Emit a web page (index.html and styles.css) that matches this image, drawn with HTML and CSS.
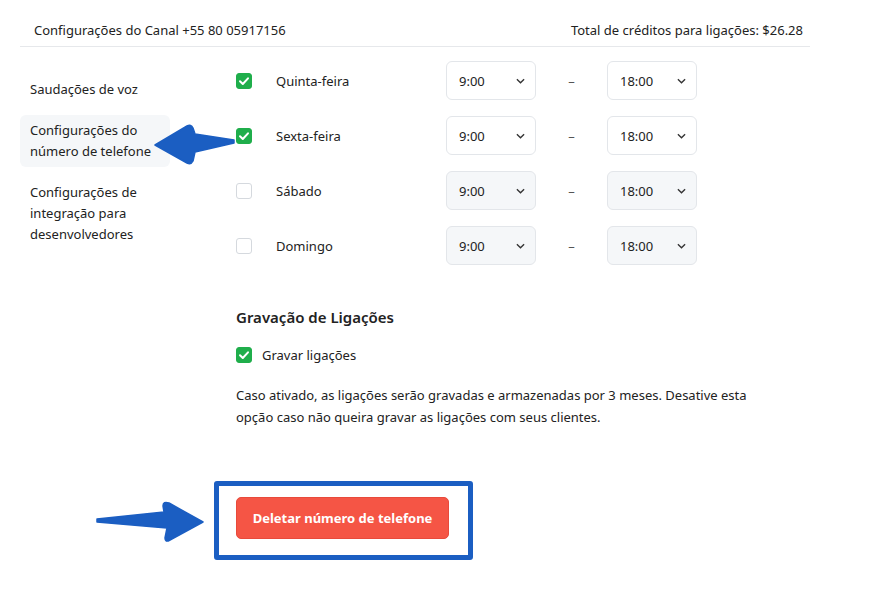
FILE: index.html
```html
<!DOCTYPE html>
<html lang="pt-BR">
<head>
<meta charset="utf-8">
<title>Configurações do Canal</title>
<link rel="stylesheet" href="styles.css">
</head>
<body>
<div class="page">
  <header class="topbar">
    <span>Configurações do Canal +55 80 05917156</span>
    <span>Total de créditos para ligações: $26.28</span>
  </header>
  <div class="main">
    <nav class="sidebar">
      <div class="nav-item">Saudações de voz</div>
      <div class="nav-item active">Configurações do número de telefone
        <svg class="arrow arrow-left" width="90" height="56" viewBox="0 0 90 56">
          <path d="M84 25 L45 19 L43 13 Q41 9 37 11 L5 30 L37 48 Q41 50 43 46 L45 37 L84 28 Z" fill="#1b5ec2" stroke="#1b5ec2" stroke-width="1.5" stroke-linejoin="round"/>
        </svg>
      </div>
      <div class="nav-item">Configurações de integração para desenvolvedores</div>
    </nav>
    <section class="content">
      <div class="days">
        <div class="day">
          <span class="cb checked"><svg viewBox="0 0 16 16"><path d="M4 8.2 L6.8 11 L12 5.3" fill="none" stroke="#fff" stroke-width="2" stroke-linecap="round" stroke-linejoin="round"/></svg></span>
          <span class="day-name">Quinta-feira</span>
          <div class="sel"><span>9:00</span><svg class="chev" viewBox="0 0 10 6"><path d="M1 1 L5 5 L9 1" fill="none" stroke="#333" stroke-width="1.5"/></svg></div>
          <span class="dash">–</span>
          <div class="sel"><span>18:00</span><svg class="chev" viewBox="0 0 10 6"><path d="M1 1 L5 5 L9 1" fill="none" stroke="#333" stroke-width="1.5"/></svg></div>
        </div>
        <div class="day">
          <span class="cb checked"><svg viewBox="0 0 16 16"><path d="M4 8.2 L6.8 11 L12 5.3" fill="none" stroke="#fff" stroke-width="2" stroke-linecap="round" stroke-linejoin="round"/></svg></span>
          <span class="day-name">Sexta-feira</span>
          <div class="sel"><span>9:00</span><svg class="chev" viewBox="0 0 10 6"><path d="M1 1 L5 5 L9 1" fill="none" stroke="#333" stroke-width="1.5"/></svg></div>
          <span class="dash">–</span>
          <div class="sel"><span>18:00</span><svg class="chev" viewBox="0 0 10 6"><path d="M1 1 L5 5 L9 1" fill="none" stroke="#333" stroke-width="1.5"/></svg></div>
        </div>
        <div class="day">
          <span class="cb"></span>
          <span class="day-name">Sábado</span>
          <div class="sel disabled"><span>9:00</span><svg class="chev" viewBox="0 0 10 6"><path d="M1 1 L5 5 L9 1" fill="none" stroke="#333" stroke-width="1.5"/></svg></div>
          <span class="dash">–</span>
          <div class="sel disabled"><span>18:00</span><svg class="chev" viewBox="0 0 10 6"><path d="M1 1 L5 5 L9 1" fill="none" stroke="#333" stroke-width="1.5"/></svg></div>
        </div>
        <div class="day">
          <span class="cb"></span>
          <span class="day-name">Domingo</span>
          <div class="sel disabled"><span>9:00</span><svg class="chev" viewBox="0 0 10 6"><path d="M1 1 L5 5 L9 1" fill="none" stroke="#333" stroke-width="1.5"/></svg></div>
          <span class="dash">–</span>
          <div class="sel disabled"><span>18:00</span><svg class="chev" viewBox="0 0 10 6"><path d="M1 1 L5 5 L9 1" fill="none" stroke="#333" stroke-width="1.5"/></svg></div>
        </div>
      </div>
      <h3 class="section-title">Gravação de Ligações</h3>
      <label class="check-row">
        <span class="cb checked"><svg viewBox="0 0 16 16"><path d="M4 8.2 L6.8 11 L12 5.3" fill="none" stroke="#fff" stroke-width="2" stroke-linecap="round" stroke-linejoin="round"/></svg></span>
        <span>Gravar ligações</span>
      </label>
      <p class="desc">Caso ativado, as ligações serão gravadas e armazenadas por 3 meses. Desative esta opção caso não queira gravar as ligações com seus clientes.</p>
      <div class="delete-wrap">
        <div class="highlight"></div>
        <svg class="arrow arrow-right" width="112" height="48" viewBox="0 0 112 48">
          <path d="M2 21 L69 14 L68 8 Q68 3 74 5 L108 24 L75 42 Q70 45 70 40 L72 30 L2 24 Z" fill="#1b5ec2" stroke="#1b5ec2" stroke-width="1.5" stroke-linejoin="round"/>
        </svg>
        <button class="btn-delete">Deletar número de telefone</button>
      </div>
    </section>
  </div>
</div>
</body>
</html>
```

FILE: styles.css
```css
* { box-sizing: border-box; }
html, body { min-height: 611px; }
body {
  margin: 0;
  background: #fff;
  font-family: "Noto Sans", "Open Sans", sans-serif;
  font-size: 13px;
  color: #222;
}
.page {
  width: 790px;
  margin-left: 20px;
  padding-bottom: 60px;
}
.topbar {
  display: flex;
  justify-content: space-between;
  align-items: center;
  height: 47px;
  padding: 14px 7px 0 14px;
  border-bottom: 1px solid #e6e8eb;
}
.main {
  display: grid;
  grid-template-columns: 150px 1fr;
  column-gap: 66px;
}
.sidebar {
  display: flex;
  flex-direction: column;
  gap: 10px;
  padding-top: 27px;
}
.nav-item {
  position: relative;
  padding: 5px 10px;
  line-height: 21px;
  border-radius: 6px;
}
.nav-item.active {
  background: #f5f7f9;
}
.arrow { position: absolute; }
.arrow-left { left: 130px; top: 0; }
.content {
  padding-top: 14px;
}
.days {
  display: flex;
  flex-direction: column;
  gap: 16px;
}
.day {
  display: flex;
  align-items: center;
  height: 39px;
}
.cb {
  width: 16px;
  height: 16px;
  flex: none;
  border: 1px solid #d5d9de;
  border-radius: 3px;
  background: #fff;
  display: flex;
}
.cb svg { width: 16px; height: 16px; margin: -1px; }
.cb.checked {
  background: #1fae4b;
  border-color: #1fae4b;
}
.day-name {
  margin-left: 24px;
  width: 170px;
}
.sel {
  width: 90px;
  height: 39px;
  border: 1px solid #e3e6ea;
  border-radius: 6px;
  background: #fff;
  display: flex;
  align-items: center;
  justify-content: space-between;
  padding: 0 10px 0 12px;
}
.sel.disabled { background: #f5f7f9; }
.chev { width: 9px; height: 6px; }
.dash {
  width: 71px;
  text-align: center;
  color: #555;
}
.section-title {
  margin: 41px 0 0;
  font-size: 15px;
  font-weight: 600;
  line-height: 22px;
}
.check-row {
  display: flex;
  align-items: center;
  gap: 10px;
  margin-top: 17px;
  line-height: 20px;
}
.desc {
  margin: 19px 0 0;
  width: 530px;
  line-height: 22px;
}
.delete-wrap {
  position: relative;
  margin-top: 69px;
  width: 213px;
}
.highlight {
  position: absolute;
  left: -22px;
  top: -16px;
  width: 259px;
  height: 79px;
  border: 5px solid #1b5ec2;
  border-radius: 3px;
}
.arrow-right { left: -141px; top: 1px; }
.btn-delete {
  position: relative;
  display: block;
  width: 213px;
  height: 42px;
  border: 1px solid #e84a3b;
  border-radius: 5px;
  background: #f55545;
  color: #fff;
  font-family: "Noto Sans", "Open Sans", sans-serif;
  font-size: 13px;
  font-weight: 700;
}
```
